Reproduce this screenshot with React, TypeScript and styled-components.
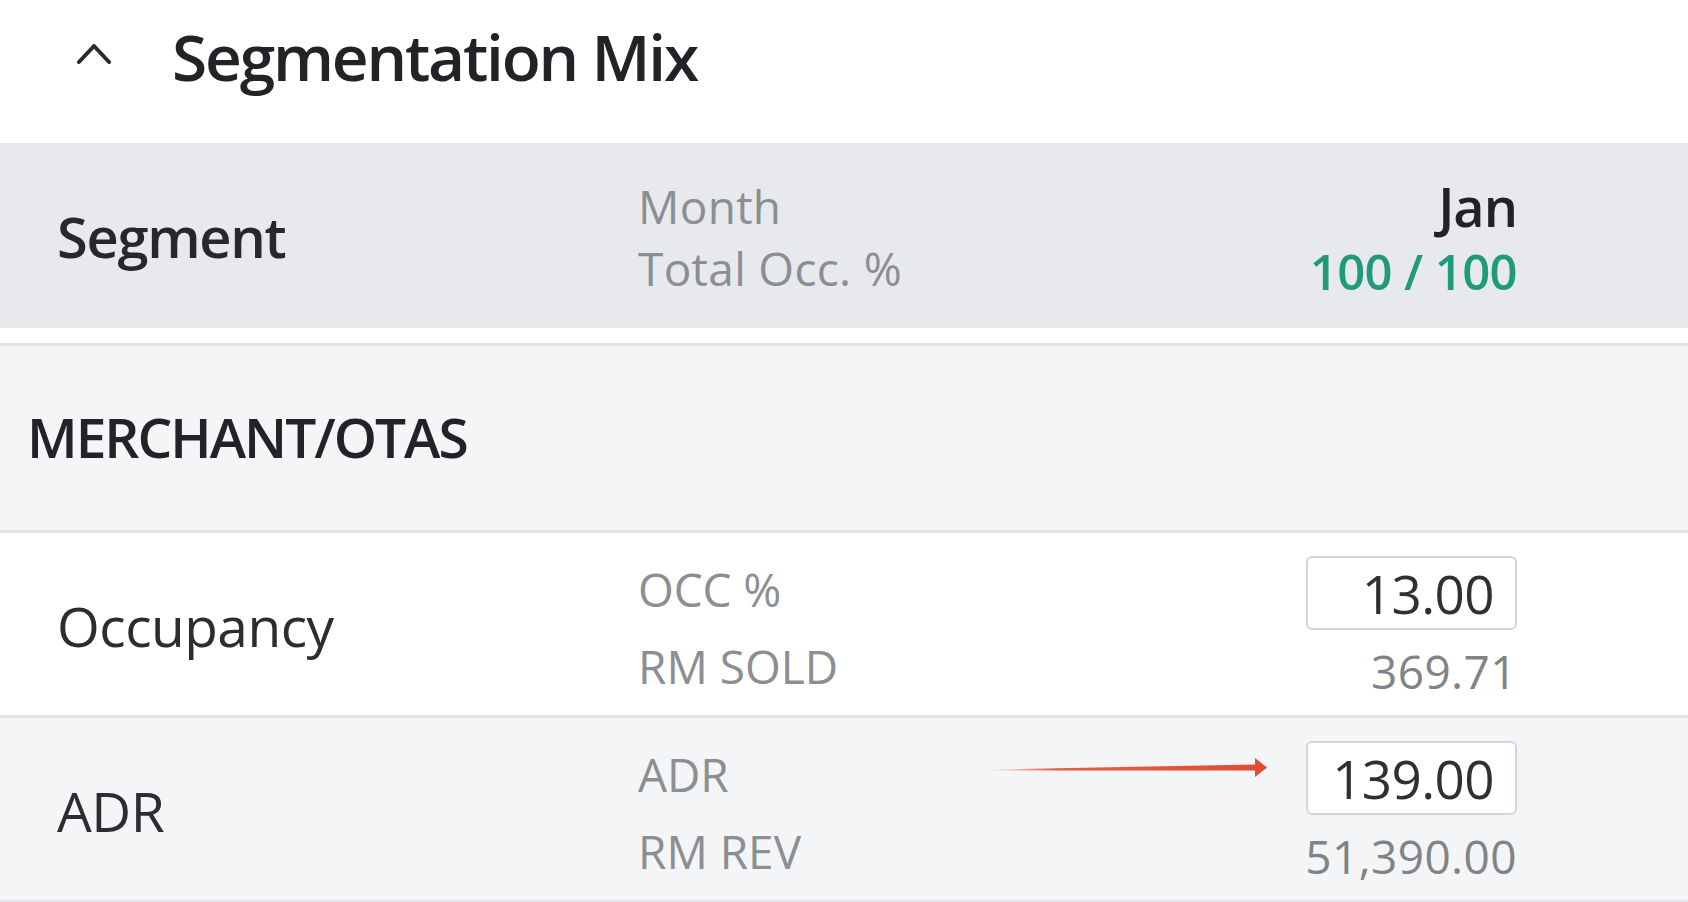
import React from "react";
import styled, { createGlobalStyle } from "styled-components";

const GlobalStyle = createGlobalStyle`
  html, body { margin: 0; padding: 0; background: #ffffff; }
  body { font-family: "Open Sans", "Noto Sans", "Liberation Sans", sans-serif; }
  * { box-sizing: border-box; }
`;

const Page = styled.div`
  width: 1688px;
  height: 902px;
  overflow: hidden;
  background: #ffffff;
`;

const TitleBar = styled.div`
  height: 143px;
  padding: 25px 0 0 77px;
  display: flex;
  align-items: flex-start;
  gap: 61px;
`;

const Chevron = styled.svg`
  margin-top: 18px;
  flex: none;
`;

const Title = styled.h1`
  margin: 0;
  font-size: 64px;
  line-height: 64px;
  font-weight: 600;
  color: #222326;
  letter-spacing: -2.2px;
`;

const Grid = styled.div`
  display: grid;
  grid-template-columns: 638px 668px 211px 1fr;
`;

const HeaderRow = styled(Grid)`
  height: 185px;
  background: #e8e9ed;
  align-items: center;
`;

const SegmentHead = styled.div`
  padding-left: 57px;
  font-size: 56px;
  font-weight: 600;
  color: #26282b;
  letter-spacing: -1.3px;
`;

const HeadLabels = styled.div`
  display: flex;
  flex-direction: column;
  font-size: 46px;
  line-height: 62px;
  color: #8b8e93;
  letter-spacing: 0.3px;
  padding-top: 2px;
`;

const HeadValues = styled.div`
  display: flex;
  flex-direction: column;
  align-items: flex-end;
  padding-top: 6px;
`;

const MonthName = styled.div`
  font-size: 54px;
  line-height: 65px;
  font-weight: 600;
  color: #222326;
  letter-spacing: -1px;
`;

const OccTotal = styled.div`
  font-size: 49px;
  line-height: 65px;
  font-weight: 600;
  color: #1f9b7c;
  letter-spacing: -0.6px;
`;

const GroupRow = styled.div`
  margin-top: 15px;
  height: 190px;
  border-top: 3px solid #e2e4e7;
  border-bottom: 3px solid #e2e4e7;
  background: #f4f5f7;
  display: flex;
  align-items: center;
  padding: 0 0 4px 27px;
`;

const GroupName = styled.div`
  font-size: 55px;
  font-weight: 600;
  color: #222326;
  letter-spacing: -2px;
`;

const DataRow = styled(Grid)<{ $alt?: boolean }>`
  background: ${(p) => (p.$alt ? "#f4f5f7" : "#ffffff")};
  padding: 23px 0 14px;
  border-bottom: 3px solid #e2e4e7;
`;

const RowLabel = styled.div`
  align-self: center;
  padding-left: 57px;
  padding-bottom: 6px;
  font-size: 55px;
  font-weight: 400;
  color: #2b2d30;
  letter-spacing: -0.5px;
`;

const Stack = styled.div<{ $right?: boolean }>`
  display: flex;
  flex-direction: column;
  align-items: ${(p) => (p.$right ? "flex-end" : "flex-start")};
`;

const MetricTop = styled.div`
  height: 74px;
  display: flex;
  align-items: center;
  padding-bottom: 9px;
  font-size: 46px;
  color: #8b8e93;
  letter-spacing: -0.1px;
`;

const MetricBottom = styled.div`
  margin-top: 6px;
  height: 60px;
  font-size: 46px;
  line-height: 60px;
  color: #8b8e93;
  letter-spacing: 0px;
`;

const InputWrap = styled.div`
  position: relative;
  width: 211px;
`;

const NumberInput = styled.input`
  display: block;
  width: 211px;
  height: 74px;
  border: 2px solid #d2d6db;
  border-radius: 6px;
  background: #ffffff;
  padding: 0 21px 0 8px;
  text-align: right;
  font-family: "Open Sans", "Noto Sans", sans-serif;
  font-size: 53px;
  color: #2e3033;
  letter-spacing: -0.6px;
  outline: none;
`;

const Computed = styled.div`
  margin-top: 11px;
  height: 60px;
  font-size: 46px;
  line-height: 60px;
  color: #808388;
  letter-spacing: 0.4px;
  text-align: right;
`;

const Arrow = styled.svg`
  position: absolute;
  top: 17px;
  right: calc(100% + 39px);
`;

const ChevronUp = () => (
  <Chevron width="34" height="22" viewBox="0 0 34 22" aria-hidden="true">
    <polyline
      points="2,19 17,3 32,19"
      fill="none"
      stroke="#2a2b2e"
      strokeWidth="4"
      strokeLinecap="round"
      strokeLinejoin="round"
    />
  </Chevron>
);

const RedArrow = () => (
  <Arrow width="278" height="20" viewBox="0 0 278 20" aria-hidden="true">
    <defs>
      <linearGradient id="shaft" x1="0" y1="0" x2="1" y2="0">
        <stop offset="0" stopColor="#e24b36" stopOpacity="0" />
        <stop offset="0.25" stopColor="#e24b36" stopOpacity="0.9" />
        <stop offset="1" stopColor="#e24b36" stopOpacity="1" />
      </linearGradient>
    </defs>
    <polygon points="0,11.6 268,6.4 268,12.6 0,12.4" fill="url(#shaft)" />
    <polygon points="266,0 278,9.5 266,19" fill="#e24b36" />
  </Arrow>
);

type Metric = {
  label: string;
  topLabel: string;
  bottomLabel: string;
  input: string;
  computed: string;
  alt?: boolean;
  arrow?: boolean;
};

const rows: Metric[] = [
  { label: "Occupancy", topLabel: "OCC %", bottomLabel: "RM SOLD", input: "13.00", computed: "369.71" },
  { label: "ADR", topLabel: "ADR", bottomLabel: "RM REV", input: "139.00", computed: "51,390.00", alt: true, arrow: true },
];

export default function App() {
  return (
    <Page>
      <GlobalStyle />
      <TitleBar>
        <ChevronUp />
        <Title>Segmentation Mix</Title>
      </TitleBar>

      <HeaderRow>
        <SegmentHead>Segment</SegmentHead>
        <HeadLabels>
          <span>Month</span>
          <span>Total Occ. %</span>
        </HeadLabels>
        <HeadValues>
          <MonthName>Jan</MonthName>
          <OccTotal>100 / 100</OccTotal>
        </HeadValues>
        <div />
      </HeaderRow>

      <GroupRow>
        <GroupName>MERCHANT/OTAS</GroupName>
      </GroupRow>

      {rows.map((r) => (
        <DataRow key={r.label} $alt={r.alt}>
          <RowLabel>{r.label}</RowLabel>
          <Stack>
            <MetricTop>{r.topLabel}</MetricTop>
            <MetricBottom>{r.bottomLabel}</MetricBottom>
          </Stack>
          <Stack $right>
            <InputWrap>
              {r.arrow && <RedArrow />}
              <NumberInput readOnly defaultValue={r.input} />
            </InputWrap>
            <Computed>{r.computed}</Computed>
          </Stack>
          <div />
        </DataRow>
      ))}
    </Page>
  );
}
